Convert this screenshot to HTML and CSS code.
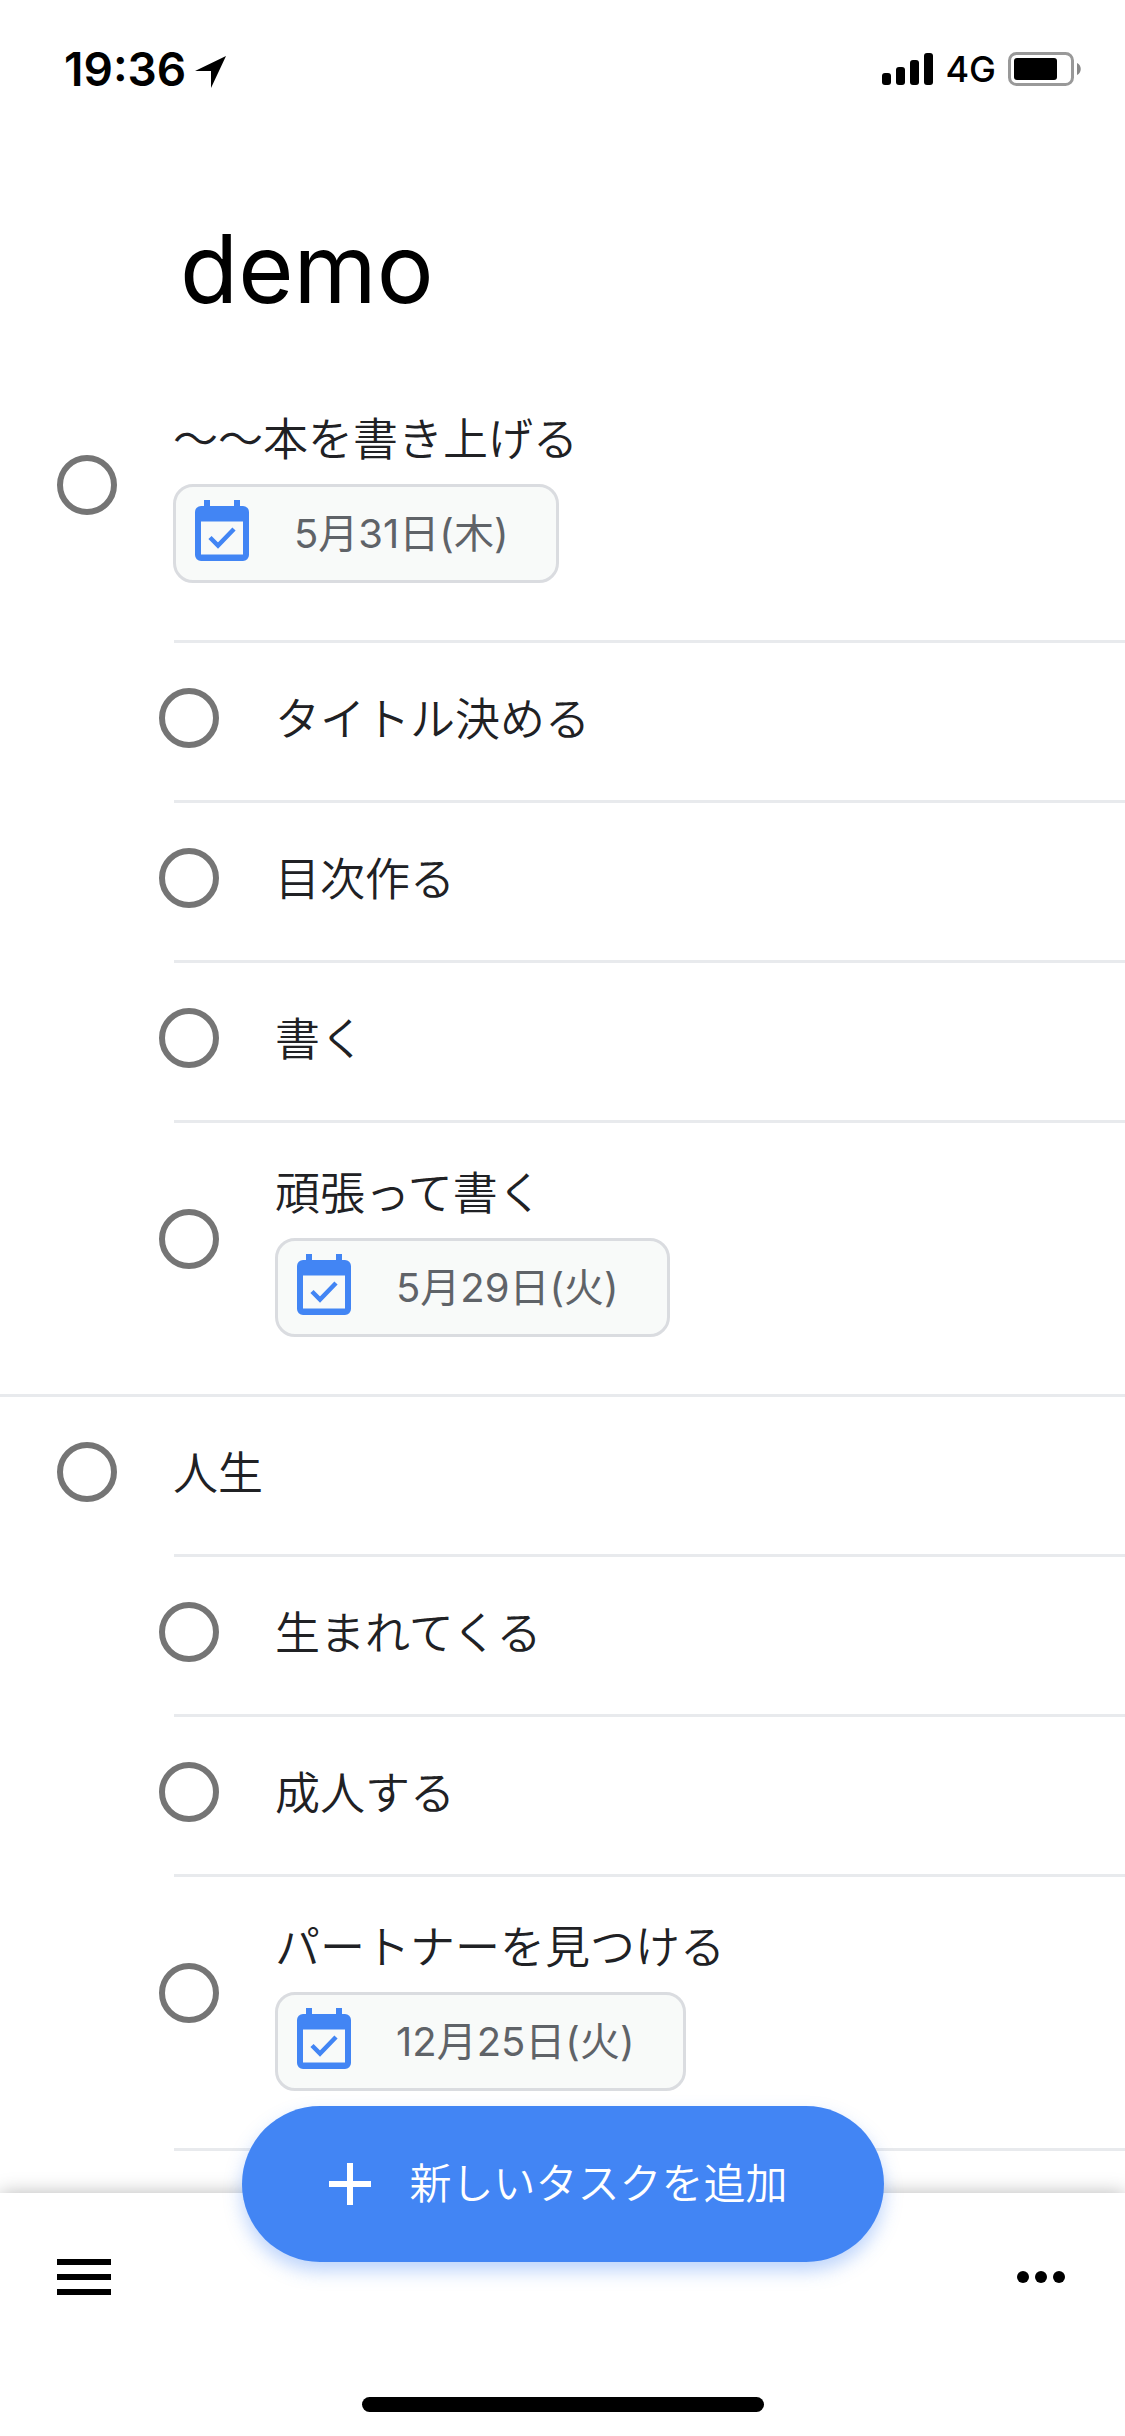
FILE: index.html
```html
<!DOCTYPE html>
<html lang="ja">
<head>
    <meta charset="UTF-8">
    <meta name="viewport" content="width=device-width, initial-scale=1.0">
    <title>demo</title>
    <link rel="stylesheet" href="styles.css">
</head>
<body>
    <!-- shared icons -->
    <svg class="sprite" aria-hidden="true">
        <symbol id="icon-calendar" viewBox="0 0 54 61">
            <path fill="#4285f4" fill-rule="evenodd" d="M9 0h6v6h24V0h6v6h3a6 6 0 0 1 6 6v43a6 6 0 0 1-6 6H6a6 6 0 0 1-6-6V12a6 6 0 0 1 6-6h3zM6 21.500v33h42v-33z"/>
            <path fill="none" stroke="#4285f4" stroke-width="4.500" d="M15 37.500l8 8 16-16.500"/>
        </symbol>
    </svg>

    <div class="status-bar">
        <div class="status-left">
            <span class="time">19:36</span>
            <svg class="location" viewBox="0 0 32 32"><path d="M31 0L16 32V15H0z"/></svg>
        </div>
        <div class="status-right">
            <svg class="signal" viewBox="0 0 51 32">
                <rect x="0" y="20" width="9" height="12" rx="3"/>
                <rect x="14" y="14" width="9" height="18" rx="3"/>
                <rect x="28" y="7" width="9" height="25" rx="3"/>
                <rect x="42" y="0" width="9" height="32" rx="3"/>
            </svg>
            <span class="network">4G</span>
            <svg class="battery" viewBox="0 0 74 34">
                <rect x="1.500" y="1.500" width="63" height="31" rx="7" fill="none" stroke="#999" stroke-width="3"/>
                <rect x="6" y="6" width="43" height="22" rx="3"/>
                <path fill="#888" d="M69 11c5 2 5 10 0 12z"/>
            </svg>
        </div>
    </div>

    <main>
        <h1>demo</h1>
        <ul class="task-list">
            <li class="task dated">
                <input type="checkbox" class="check" id="task1">
                <div class="task-body">
                    <label for="task1">〜〜本を書き上げる</label>
                    <button class="date"><svg class="calendar"><use href="#icon-calendar"/></svg>5月31日(木)</button>
                </div>
            </li>
            <li class="task sub">
                <input type="checkbox" class="check" id="task2">
                <label for="task2">タイトル決める</label>
            </li>
            <li class="task sub">
                <input type="checkbox" class="check" id="task3">
                <label for="task3">目次作る</label>
            </li>
            <li class="task sub">
                <input type="checkbox" class="check" id="task4">
                <label for="task4">書く</label>
            </li>
            <li class="task sub dated group-end">
                <input type="checkbox" class="check" id="task5">
                <div class="task-body">
                    <label for="task5">頑張って書く</label>
                    <button class="date"><svg class="calendar"><use href="#icon-calendar"/></svg>5月29日(火)</button>
                </div>
            </li>
            <li class="task">
                <input type="checkbox" class="check" id="task6">
                <label for="task6">人生</label>
            </li>
            <li class="task sub">
                <input type="checkbox" class="check" id="task7">
                <label for="task7">生まれてくる</label>
            </li>
            <li class="task sub">
                <input type="checkbox" class="check" id="task8">
                <label for="task8">成人する</label>
            </li>
            <li class="task sub dated">
                <input type="checkbox" class="check" id="task9">
                <div class="task-body">
                    <label for="task9">パートナーを見つける</label>
                    <button class="date"><svg class="calendar"><use href="#icon-calendar"/></svg>12月25日(火)</button>
                </div>
            </li>
        </ul>
    </main>

    <footer class="bottom-bar">
        <div class="actions">
            <button class="icon-button" aria-label="メニュー">
                <svg width="54" height="36" viewBox="0 0 54 36"><path d="M0 0h54v6H0zM0 15h54v6H0zM0 30h54v6H0z"/></svg>
            </button>
            <button class="icon-button" aria-label="その他">
                <svg width="48" height="12" viewBox="0 0 48 12"><circle cx="6" cy="6" r="6"/><circle cx="24" cy="6" r="6"/><circle cx="42" cy="6" r="6"/></svg>
            </button>
        </div>
        <button class="add-task">
            <svg width="42" height="42" viewBox="0 0 42 42"><path fill="#fff" d="M18 0h6v18h18v6H24v18h-6V24H0v-6h18z"/></svg>
            新しいタスクを追加
        </button>
        <div class="home-indicator"></div>
    </footer>
</body>
</html>
```

FILE: styles.css
```css
:root {
    --blue: #4285f4;
    --text: #202124;
    --text-muted: #5f6368;
    --line: #e8eaed;
    --chip-line: #dadce0;
    --chip-bg: #f8faf9;
    --ring: #757575;
}
* {
    box-sizing: border-box;
}
body {
    margin: 0;
    height: 100vh;
    display: flex;
    flex-direction: column;
    overflow: hidden;
    background-color: #fff;
    color: var(--text);
    font-family: Inter, "Noto Sans CJK JP", sans-serif;
}
button {
    border: none;
    padding: 0;
    background: none;
    font-family: inherit;
    cursor: pointer;
}
svg {
    flex: none;
    display: block;
}
.sprite {
    position: absolute;
    width: 0;
    height: 0;
}

/* status bar */
.status-bar {
    display: flex;
    justify-content: space-between;
    align-items: center;
    padding: 39px 43px 0 64px;
    color: #000;
}
.status-left,
.status-right {
    display: flex;
    align-items: center;
}
.status-left {
    gap: 9px;
}
.time {
    font-size: 46px;
    line-height: 60px;
    font-weight: 600;
}
.location {
    width: 32px;
    height: 32px;
    margin-top: 6px;
}
.signal {
    width: 51px;
    height: 32px;
}
.network {
    margin: 0 12px;
    font-size: 36px;
    line-height: 60px;
    font-weight: 500;
}
.battery {
    width: 74px;
    height: 34px;
}

/* task list */
main {
    flex: 1;
    min-height: 0;
    overflow: hidden;
}
h1 {
    margin: 0;
    padding: 110px 0 40px 180px;
    color: #000;
    font-size: 95px;
    line-height: 120px;
    font-weight: 400;
}
.task-list {
    margin: 0;
    padding: 0;
    list-style: none;
}
.task {
    display: flex;
    align-items: flex-start;
    gap: 56px;
    margin-left: 174px;
    padding: 45px 0 48px;
    border-bottom: 3px solid var(--line);
    font-size: 45px;
    line-height: 64px;
    font-weight: 350;
}
.task.dated {
    padding: 39px 0 57px;
}
.task.group-end {
    margin-left: 0;
    padding-left: 174px;
}
.check {
    appearance: none;
    flex: none;
    width: 60px;
    height: 60px;
    margin: 0 0 0 -117px;
    border: 6px solid var(--ring);
    border-radius: 50%;
}
.check:checked {
    background-color: var(--blue);
    border-color: var(--blue);
}
.sub .check {
    margin-left: -15px;
}
.dated .check {
    margin-top: 47px;
}
.task-body {
    display: flex;
    flex-direction: column;
    align-items: flex-start;
    gap: 12px;
}
.date {
    display: flex;
    align-items: center;
    gap: 45px;
    height: 99px;
    padding: 0 48px 0 19px;
    border: 3px solid var(--chip-line);
    border-radius: 20px;
    background-color: var(--chip-bg);
    color: var(--text-muted);
    font-size: 40px;
    line-height: 60px;
    font-weight: 400;
}
.calendar {
    width: 54px;
    height: 61px;
    margin-bottom: 6px;
}

/* bottom bar */
.bottom-bar {
    position: relative;
    display: flex;
    flex-direction: column;
    align-items: center;
    justify-content: space-between;
    height: 243px;
    padding-bottom: 24px;
    background-color: #fff;
    box-shadow: 0 0 18px rgba(0, 0, 0, 0.28);
}
.actions {
    align-self: stretch;
    display: flex;
    justify-content: space-between;
    padding: 54px 60px 0 57px;
}
.icon-button {
    display: flex;
    align-items: center;
    height: 60px;
}
.add-task {
    position: absolute;
    top: -87px;
    left: 50%;
    transform: translateX(-50%);
    display: flex;
    align-items: center;
    gap: 39px;
    height: 156px;
    padding: 0 96px 0 87px;
    border-radius: 78px;
    background-color: var(--blue);
    box-shadow: 0 9px 18px rgba(66, 133, 244, 0.35);
    color: #fff;
    font-size: 42px;
    line-height: 60px;
    font-weight: 350;
    white-space: nowrap;
}
.home-indicator {
    width: 402px;
    height: 15px;
    border-radius: 8px;
    background-color: #000;
}
```
